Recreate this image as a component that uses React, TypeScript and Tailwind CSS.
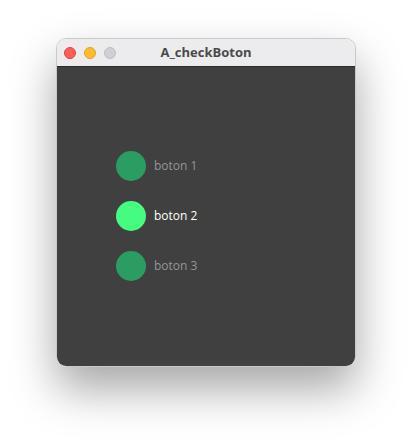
const items = [
  { label: "boton 1", on: false },
  { label: "boton 2", on: true },
  { label: "boton 3", on: false },
];

export default function App() {
  return (
    <div className="h-[440px] w-[412px] bg-white pl-[56px] pt-[38px]" style={{ fontFamily: "'Open Sans', 'Liberation Sans', sans-serif" }}>
      <div className="w-[300px] overflow-hidden rounded-[10px] border border-[#c9c9c9] shadow-[0_22px_45px_rgba(0,0,0,0.35)]">
        <div className="relative flex h-[28px] items-center border-b border-[#2a2a2a] bg-[#ececee] px-[7px]">
          <div className="flex gap-[8px]">
            <span className="h-[12px] w-[12px] rounded-full border border-[#e0443e] bg-[#ff5f57]" />
            <span className="h-[12px] w-[12px] rounded-full border border-[#dea123] bg-[#febc2e]" />
            <span className="h-[12px] w-[12px] rounded-full border border-[#bdbdbd] bg-[#d0d0d0]" />
          </div>
          <div className="absolute inset-0 flex items-center justify-center text-[13px] font-bold text-[#4a4a4a]">A_checkBoton</div>
        </div>
        <div className="flex h-[299px] flex-col gap-[20px] bg-[#404040] pl-[59px] pt-[84px]">
          {items.map((it) => (
            <div key={it.label} className="flex items-center gap-[8px]">
              <span className={`h-[30px] w-[30px] rounded-full ${it.on ? "bg-[#45fc80]" : "bg-[#2c9d62]"}`} />
              <span className={`text-[12px] ${it.on ? "text-white" : "text-[#959595]"}`}>{it.label}</span>
            </div>
          ))}
        </div>
      </div>
    </div>
  );
}
